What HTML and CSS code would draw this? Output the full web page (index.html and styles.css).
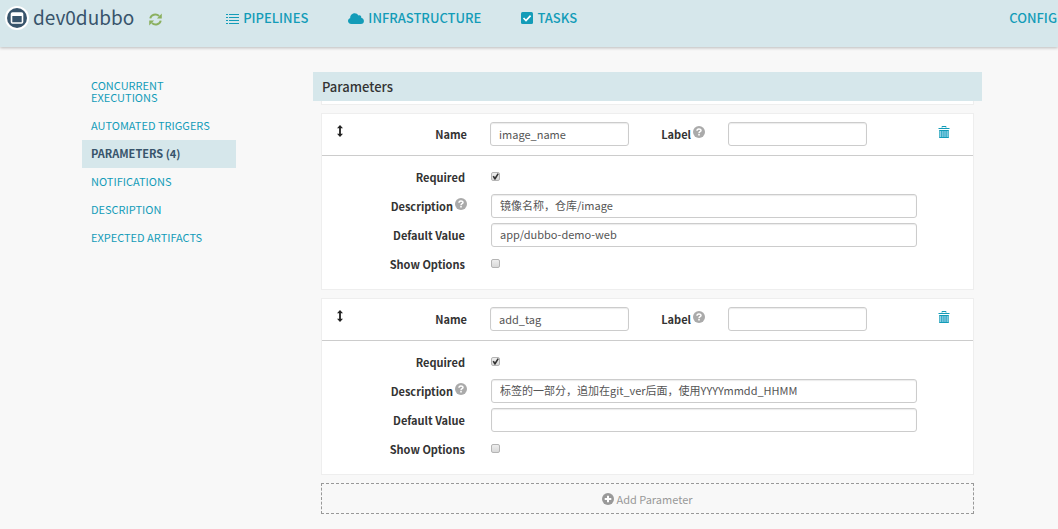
FILE: index.html
```html
<!DOCTYPE html>
<html lang="en">
<head>
<meta charset="utf-8">
<meta name="viewport" content="width=device-width, initial-scale=1">
<title>dev0dubbo</title>
<link rel="stylesheet" href="styles.css">
</head>
<body>
<svg class="sprite" aria-hidden="true">
  <symbol id="i-help" viewBox="0 0 12 12"><circle cx="6" cy="6" r="6" fill="#aaa"/><path d="M4 4.700C4 2.400 8 2.400 8 4.500C8 5.800 6 5.700 6 7.200" fill="none" stroke="#fff" stroke-width="1.500"/><path d="M5.200 8h1.600v1.500H5.200z" fill="#fff"/></symbol>
  <symbol id="i-move" viewBox="0 0 8 12"><path d="M4 0L7 3.200H4.900V8.800H7L4 12L1 8.800H3.100V3.200H1z" fill="#222"/></symbol>
  <symbol id="i-trash" viewBox="0 0 12 14"><path d="M2 5h8v8H2z" fill="#8fd0e6"/><path d="M4 2.500V1.500h4v1M.5 3.500h11M1.500 5.500h9M1.500 12.500h9" fill="none" stroke="#139cb8"/><path d="M1.500 5v8M10.500 5v8M3.500 5v8M5.200 5v8M7 5v8M8.700 5v8" fill="none" stroke="#139cb8" stroke-width=".7"/></symbol>
</svg>

<header class="topbar">
  <a class="brand" href="#">
    <svg class="brand-logo" viewBox="0 0 24 24" aria-hidden="true"><circle cx="12" cy="12" r="12" fill="#fff"/><circle cx="12" cy="12" r="10" fill="#38546b"/><rect x="6.500" y="7" width="11" height="10" rx="1" fill="none" stroke="#fff" stroke-width="1.600"/><path d="M7 7h10v3H7z" fill="#fff"/></svg>
    <span>dev0dubbo</span>
  </a>
  <button class="refresh" type="button" aria-label="Refresh">
    <svg viewBox="0 0 12 12" width="13" height="13" aria-hidden="true"><path d="M1.200 5C1.700 1.500 6.500.2 9.300 2.700M10.800 7C10.300 10.500 5.500 11.800 2.700 9.300" fill="none" stroke="#8bb05f" stroke-width="1.800"/><path d="M11.800 .5V5H7.300zM.2 11.500V7h4.500z" fill="#8bb05f"/></svg>
  </button>
  <nav class="mainnav">
    <a href="#"><svg viewBox="0 0 13 11" width="13" height="11" aria-hidden="true"><path d="M0 1.500h2M0 4.500h2M0 7.500h2M0 10.500h2M3 1.500h10M3 4.500h10M3 7.500h10M3 10.500h10" stroke="#139cb8"/></svg>PIPELINES</a>
    <a href="#"><svg viewBox="0 0 16 11" width="16" height="11" aria-hidden="true"><path d="M3.500 11C-.8 11-1 5.800 2.200 5.200C1.800.2 8.600-1.600 10.300 2.500C12 1.500 13.700 3 13.200 4.700C17 5.300 16.800 11 12.800 11z" fill="#139cb8"/></svg>INFRASTRUCTURE</a>
    <a href="#"><svg viewBox="0 0 12 12" width="12" height="12" aria-hidden="true"><rect width="12" height="12" rx="1.500" fill="#139cb8"/><path d="M2.500 6l2.500 2.500L9.600 3.700" fill="none" stroke="#fff" stroke-width="1.700"/></svg>TASKS</a>
  </nav>
  <a class="config" href="#">CONFIG</a>
</header>

<main class="page">
  <nav class="sidenav">
    <a href="#">CONCURRENT EXECUTIONS</a>
    <a href="#">AUTOMATED TRIGGERS</a>
    <a class="active" href="#">PARAMETERS (4)</a>
    <a href="#">NOTIFICATIONS</a>
    <a href="#">DESCRIPTION</a>
    <a href="#">EXPECTED ARTIFACTS</a>
  </nav>

  <section class="content">
    <h1 class="title">Parameters</h1>
    <div class="cards">
      <div class="card card-tail"></div>

      <form class="card">
        <div class="card-head">
          <button class="icon-btn" type="button" aria-label="Reorder"><svg width="8" height="12"><use href="#i-move"/></svg></button>
          <label for="name1">Name</label>
          <input class="text" id="name1" type="text" value="image_name">
          <label for="label1">Label <svg class="help"><use href="#i-help"/></svg></label>
          <input class="text" id="label1" type="text">
          <button class="icon-btn" type="button" aria-label="Remove"><svg width="12" height="14"><use href="#i-trash"/></svg></button>
        </div>
        <div class="card-body">
          <label for="req1">Required</label><input class="check" id="req1" type="checkbox" checked>
          <label for="desc1" class="with-help">Description <svg class="help"><use href="#i-help"/></svg></label><input class="text" id="desc1" type="text" value="镜像名称，仓库/image">
          <label for="def1">Default Value</label><input class="text" id="def1" type="text" value="app/dubbo-demo-web">
          <label for="opt1">Show Options</label><input class="check" id="opt1" type="checkbox">
        </div>
      </form>

      <form class="card">
        <div class="card-head">
          <button class="icon-btn" type="button" aria-label="Reorder"><svg width="8" height="12"><use href="#i-move"/></svg></button>
          <label for="name2">Name</label>
          <input class="text" id="name2" type="text" value="add_tag">
          <label for="label2">Label <svg class="help"><use href="#i-help"/></svg></label>
          <input class="text" id="label2" type="text">
          <button class="icon-btn" type="button" aria-label="Remove"><svg width="12" height="14"><use href="#i-trash"/></svg></button>
        </div>
        <div class="card-body">
          <label for="req2">Required</label><input class="check" id="req2" type="checkbox" checked>
          <label for="desc2" class="with-help">Description <svg class="help"><use href="#i-help"/></svg></label><input class="text" id="desc2" type="text" value="标签的一部分，追加在git_ver后面，使用YYYYmmdd_HHMM">
          <label for="def2">Default Value</label><input class="text" id="def2" type="text">
          <label for="opt2">Show Options</label><input class="check" id="opt2" type="checkbox">
        </div>
      </form>

      <button class="add" type="button"><svg viewBox="0 0 12 12" width="12" height="12" aria-hidden="true"><circle cx="6" cy="6" r="6" fill="#999"/><path d="M6 2.700v6.600M2.700 6h6.600" stroke="#fff" stroke-width="2"/></svg>Add Parameter</button>
    </div>
  </section>
</main>
</body>
</html>
```
FILE: styles.css
```css
* {
  box-sizing: border-box;
}

body {
  margin: 0;
  background: #f8f8f8;
  color: #333;
  font: 11px/16px "Noto Sans CJK SC", "Open Sans", sans-serif;
}

a {
  color: #139cb8;
  text-decoration: none;
}

button {
  padding: 0;
  border: 0;
  background: none;
  font: inherit;
  cursor: pointer;
}

svg {
  display: block;
  flex: none;
}

.sprite {
  display: none;
}

.topbar {
  display: flex;
  align-items: center;
  height: 47px;
  padding: 0 1px 11px 5px;
  background: #d6e7eb;
  box-shadow: 0 1px 3px rgba(0, 0, 0, 0.25);
}

.brand {
  display: flex;
  align-items: center;
  gap: 4px;
  color: #38546b;
  font-size: 19px;
  line-height: 22px;
}

.brand span {
  padding-bottom: 2px;
}

.brand-logo {
  width: 24px;
  height: 24px;
}

.refresh {
  margin: 2px 0 0 15px;
}

.mainnav {
  display: flex;
  gap: 40px;
  margin-left: 64px;
}

.mainnav a {
  display: flex;
  align-items: center;
  gap: 4px;
}

.mainnav a,
.config {
  font-size: 13px;
  font-weight: 500;
}

.config {
  margin-left: auto;
}

.page {
  display: flex;
  gap: 77px;
  padding: 25px 76px 14px 82px;
}

.sidenav {
  flex: 0 0 154px;
  line-height: 12px;
}

.sidenav a {
  display: block;
  padding: 7px 9px 9px;
}

.sidenav a:first-child {
  padding-right: 40px;
}

.sidenav .active {
  background: #d6e7eb;
  color: #38546b;
  font-weight: 700;
}

.content {
  flex: 1;
}

.title {
  margin: 0;
  padding: 5px 9px;
  background: #d6e7eb;
  font-size: 13px;
  font-weight: 500;
  line-height: 19px;
}

.cards {
  display: grid;
  gap: 8px;
  padding: 0 8px;
}

.card {
  border: 1px solid #eee;
  background: #fff;
}

.card-tail {
  height: 4px;
  border-top: 0;
}

.card-head {
  display: grid;
  grid-template-columns: 36px 132px 139px 99px 139px 1fr;
  align-items: center;
  padding: 8px 23px 9px 0;
  border-bottom: 1px solid #ccc;
}

.card-head label {
  padding-right: 23px;
}

.icon-btn {
  align-self: start;
  justify-self: end;
  margin-top: 3px;
}

.icon-btn:first-child {
  justify-self: center;
}

label {
  display: flex;
  justify-content: flex-end;
  gap: 2px;
  font-weight: 700;
}

.help {
  width: 12px;
  height: 12px;
}

.card-body {
  display: grid;
  grid-template-columns: 145px 1fr;
  column-gap: 24px;
  grid-auto-rows: 29px;
  align-items: center;
  padding: 6px 56px 11px 0;
}

.card-body label {
  padding-right: 2px;
}

.card-body .with-help {
  padding-right: 0;
}

.text {
  width: 100%;
  height: 24px;
  padding: 0 8px 1px;
  border: 1px solid #ccc;
  border-radius: 3px;
  background: #fff;
  box-shadow: inset 0 1px 1px rgba(0, 0, 0, 0.08);
  color: #555;
  font: inherit;
}

.check {
  appearance: none;
  position: relative;
  width: 9px;
  height: 9px;
  margin: 0;
  border: 1px solid #b4b4b4;
  border-radius: 2px;
  background: linear-gradient(#eee, #d9d9d9);
}

.check:checked::before {
  content: "";
  position: absolute;
  inset: 0;
  background: #333;
  clip-path: polygon(8% 50%, 28% 40%, 42% 60%, 80% 4%, 98% 14%, 48% 98%, 36% 98%);
}

.add {
  display: flex;
  align-items: center;
  justify-content: center;
  gap: 2px;
  height: 31px;
  border: 1px dashed #999;
  color: #999;
}
```
